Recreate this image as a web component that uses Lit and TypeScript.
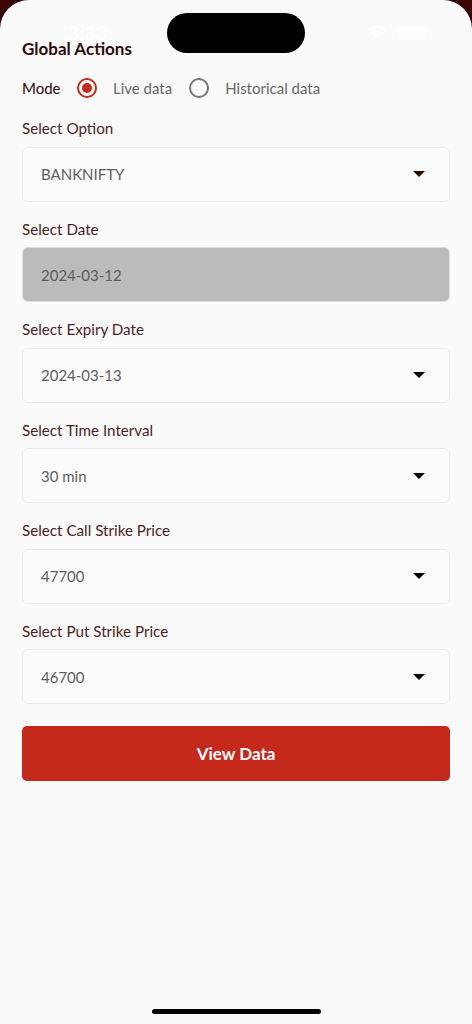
import { LitElement, html, css, svg } from "lit";
import { customElement } from "lit/decorators.js";

const fields = [
  { label: "Select Option", value: "BANKNIFTY", caret: "maroon" },
  { label: "Select Date", value: "2024-03-12", disabled: true },
  { label: "Select Expiry Date", value: "2024-03-13", caret: "black" },
  { label: "Select Time Interval", value: "30 min", caret: "black" },
  { label: "Select Call Strike Price", value: "47700", caret: "black" },
  { label: "Select Put Strike Price", value: "46700", caret: "black" },
];

@customElement("app-root")
export class AppRoot extends LitElement {
  static styles = css`
    :host {
      display: block;
      width: 472px;
      height: 1024px;
      background: #3a0404;
      font-family: Lato, "Noto Sans", sans-serif;
      overflow: hidden;
    }
    .sheet {
      position: relative;
      box-sizing: border-box;
      height: 1024px;
      background: #fafafa;
      border-radius: 29px 29px 0 0;
      padding: 41px 22px 0;
      display: flex;
      flex-direction: column;
    }
    .time {
      position: absolute;
      top: 24px;
      left: 68px;
      font-size: 20px;
      font-weight: 600;
      color: #ffffff;
      line-height: 17px;
    }
    .island {
      position: absolute;
      top: 13px;
      left: 167px;
      width: 138px;
      height: 40px;
      border-radius: 20px;
      background: #000;
    }
    .status {
      position: absolute;
      top: 25px;
      left: 367px;
      height: 14px;
      display: flex;
      align-items: center;
      gap: 12px;
    }
    .batt {
      width: 26px;
      height: 11px;
      border-radius: 3px;
      background: #fff;
      box-shadow: 0 0 0 2px rgba(255, 255, 255, 0.6);
    }
    .home {
      position: absolute;
      left: 152px;
      top: 1009px;
      width: 169px;
      height: 5px;
      border-radius: 3px;
      background: #000;
    }
    h1 {
      margin: 0;
      font-size: 17px;
      line-height: 16px;
      font-weight: 700;
      color: #2e0a0a;
    }
    .mode {
      display: flex;
      align-items: center;
      height: 22px;
      margin-top: 20px;
      font-size: 15px;
      color: #666;
    }
    .mode .name {
      color: #2e0a0a;
      width: 55px;
    }
    .radio {
      box-sizing: border-box;
      width: 20px;
      height: 20px;
      border-radius: 50%;
      border: 2px solid #777;
      display: flex;
      align-items: center;
      justify-content: center;
      margin-right: 16px;
    }
    .radio.on {
      border-color: #c4291c;
    }
    .radio.on::after {
      content: "";
      width: 10px;
      height: 10px;
      border-radius: 50%;
      background: #c4291c;
    }
    .opt {
      margin-right: 17px;
    }
    .fields {
      margin-top: 20.25px;
      display: flex;
      flex-direction: column;
      gap: 18px;
    }
    .field {
      display: flex;
      flex-direction: column;
      gap: 8.5px;
    }
    label {
      font-size: 15.2px;
      line-height: 19px;
      color: #4a1f1f;
    }
    .box {
      box-sizing: border-box;
      height: 55px;
      border: 1px solid #ebebeb;
      border-radius: 6px;
      background: #fcfcfc;
      padding: 0 24px 0 18px;
      display: flex;
      align-items: center;
      justify-content: space-between;
      font-size: 15px;
      color: #5c5c5c;
    }
    .box.disabled {
      background: #bbbbbb;
      border-color: #e0e0e0;
    }
    button {
      margin-top: 21.75px;
      height: 55px;
      border: none;
      border-radius: 5px;
      background: #c4291c;
      color: #fff;
      font-family: inherit;
      font-size: 17px;
      font-weight: 700;
    }
  `;

  private caret(color: string) {
    const fill = color === "maroon" ? "#2e0505" : "#000";
    return html`<svg width="12" height="6" viewBox="0 0 12 6">${svg`<path d="M0 0H12L6 6Z" fill=${fill}></path>`}</svg>`;
  }

  render() {
    return html`
      <div class="sheet">
        <div class="time">3:33</div>
        <div class="island"></div>
        <div class="status">
          <svg width="20" height="14" viewBox="0 0 20 15">
            <path d="M10 14.5 L13 10.8 A5 5 0 0 0 7 10.8 Z" fill="#fff"></path>
            <path d="M1 5.6 A13 13 0 0 1 19 5.6 M4 8.6 A9 9 0 0 1 16 8.6" fill="none" stroke="#fff" stroke-width="2.2"></path>
          </svg>
          <div class="batt"></div>
        </div>
        <h1>Global Actions</h1>
        <div class="mode">
          <span class="name">Mode</span>
          <span class="radio on"></span>
          <span class="opt">Live data</span>
          <span class="radio"></span>
          <span class="opt">Historical data</span>
        </div>
        <div class="fields">
          ${fields.map(
            (f) => html`
              <div class="field">
                <label>${f.label}</label>
                <div class="box ${f.disabled ? "disabled" : ""}">
                  <span>${f.value}</span>
                  ${f.caret ? this.caret(f.caret) : ""}
                </div>
              </div>
            `
          )}
        </div>
        <button>View Data</button>
        <div class="home"></div>
      </div>
    `;
  }
}
